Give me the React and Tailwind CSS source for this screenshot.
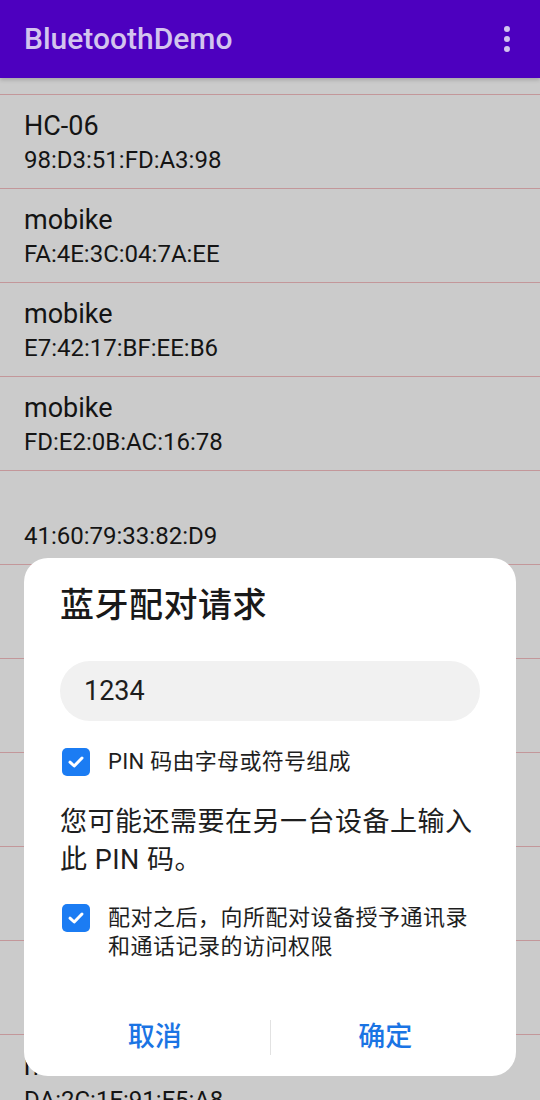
import React from "react";

const rows = [
  { name: "HC-06", mac: "98:D3:51:FD:A3:98" },
  { name: "mobike", mac: "FA:4E:3C:04:7A:EE" },
  { name: "mobike", mac: "E7:42:17:BF:EE:B6" },
  { name: "mobike", mac: "FD:E2:0B:AC:16:78" },
  { name: "", mac: "41:60:79:33:82:D9" },
  { name: "mobike", mac: "C2:11:5A:7E:30:9B" },
  { name: "mobike", mac: "D4:6F:22:A1:0C:55" },
  { name: "mobike", mac: "E9:03:B8:4D:71:2A" },
  { name: "mobike", mac: "F1:9C:63:08:E4:17" },
  { name: "mobike", mac: "C8:2B:D0:5E:93:6F" },
  { name: "mobike", mac: "DA:2C:1E:91:F5:A8" },
];

function CheckBox() {
  return (
    <div className="w-[28px] h-[28px] rounded-[5px] bg-[#1b7cf3] flex items-center justify-center shrink-0">
      <svg width="20" height="20" viewBox="0 0 20 20" fill="none">
        <path d="M4 10.2 L8.2 14 L16 6" stroke="white" strokeWidth="3" strokeLinecap="round" strokeLinejoin="round" />
      </svg>
    </div>
  );
}

export default function App() {
  const cjk = { fontFamily: 'Roboto, "Noto Sans CJK SC", sans-serif' };
  return (
    <div className="relative w-[540px] h-[1100px] overflow-hidden bg-[#cbcbcb]" style={{ fontFamily: 'Roboto, "Noto Sans CJK SC", sans-serif' }}>
      {/* App bar */}
      <div className="relative z-10 h-[78px] bg-[#4d00bf] flex items-center justify-between pl-[24px] pr-[30px] shadow-[0_2px_4px_rgba(0,0,0,0.18)]">
        <span className="text-[30px] font-medium text-[#d3c4ee] leading-none">BluetoothDemo</span>
        <div className="flex flex-col gap-[4px] items-center">
          <span className="w-[6px] h-[6px] rounded-full bg-[#d3c4ee]" />
          <span className="w-[6px] h-[6px] rounded-full bg-[#d3c4ee]" />
          <span className="w-[6px] h-[6px] rounded-full bg-[#d3c4ee]" />
        </div>
      </div>

      {/* List */}
      <div className="pt-[16px]">
        {rows.map((r, i) => (
          <div key={i} className="h-[94px] border-t border-[#c3979a] px-[24px] pt-[15px] text-[#141414]">
            <div className="text-[27px] leading-[32px] h-[32px]">{r.name}</div>
            <div className="text-[24px] leading-[30px] mt-[3px]">{r.mac}</div>
          </div>
        ))}
      </div>

      {/* Dialog */}
      <div className="absolute left-[24px] top-[558px] w-[492px] h-[518px] rounded-[24px] bg-white flex flex-col" style={cjk}>
        <div className="px-[36px] pt-[24px]">
          <div className="text-[34px] leading-[46px] font-medium text-[#191919] tracking-[0.5px]">蓝牙配对请求</div>
          <div className="mt-[33px] h-[60px] rounded-full bg-[#f1f1f1] flex items-center px-[24px]">
            <span className="text-[27px] text-[#1e1e1e]">1234</span>
          </div>
          <div className="mt-[26px] flex items-center gap-[18px] pl-[2px]">
            <CheckBox />
            <span className="text-[22px] leading-[30px] text-[#1e1e1e] tracking-[0.3px]">PIN 码由字母或符号组成</span>
          </div>
          <div className="mt-[26px] text-[27px] leading-[38px] text-[#1e1e1e] tracking-[0.5px]">
            您可能还需要在另一台设备上输入此 PIN 码。
          </div>
          <div className="mt-[24px] flex items-start gap-[18px] pl-[2px]">
            <div className="pt-[1px]"><CheckBox /></div>
            <span className="text-[22px] leading-[29px] text-[#1e1e1e] tracking-[0.5px]">配对之后，向所配对设备授予通讯录和通话记录的访问权限</span>
          </div>
        </div>
        <div className="mt-auto mb-[11px] mx-[16px] h-[56px] flex items-center">
          <div className="flex-1 text-center text-[27px] font-medium text-[#1a74e4]">取消</div>
          <div className="w-[1px] h-[35px] bg-[#e2e2e2]" />
          <div className="flex-1 text-center text-[27px] font-medium text-[#1a74e4]">确定</div>
        </div>
      </div>
    </div>
  );
}
